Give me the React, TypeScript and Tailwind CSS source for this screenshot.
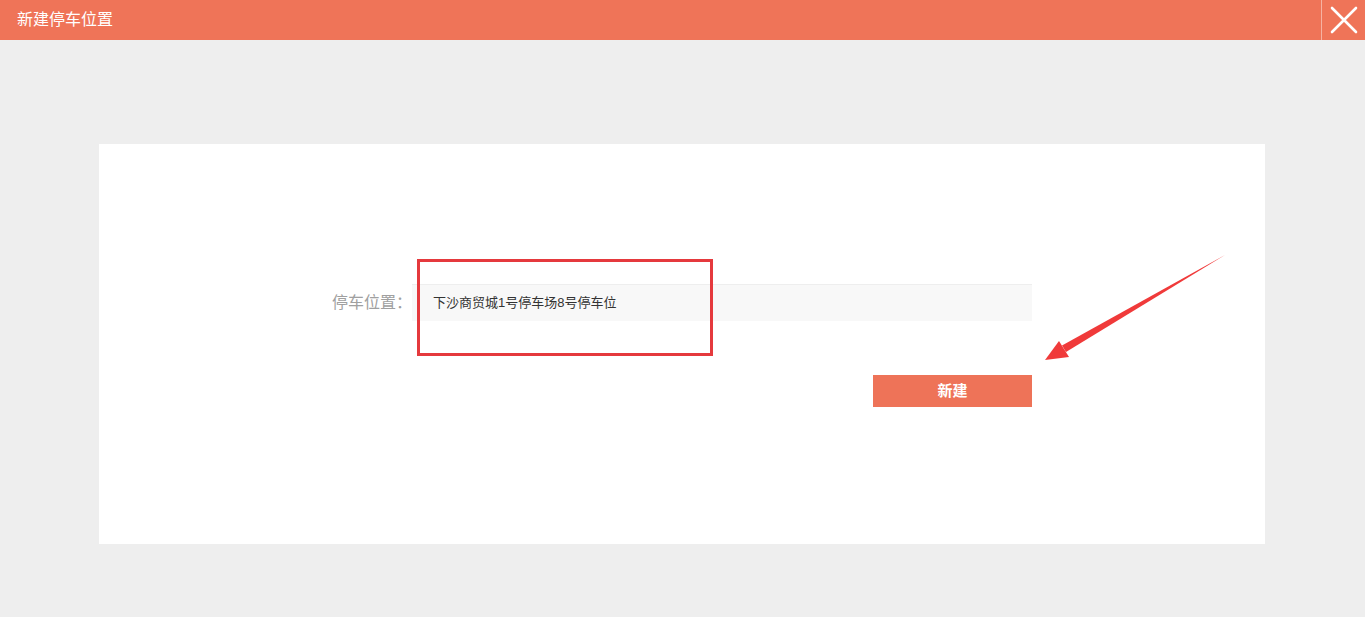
import React from 'react';

const font = { fontFamily: '"Liberation Sans", "Noto Sans CJK SC", sans-serif' };

export default function App() {
  return (
    <div className="min-h-[617px] w-[1365px] bg-[#eeeeee] flex flex-col" style={font}>
      <div className="h-10 bg-[#ef7458] flex items-center justify-between">
        <h1 className="pl-[17px] text-[16px] text-white font-normal">新建停车位置</h1>
        <button className="h-10 w-11 border-l border-[#f6b2a2] flex items-center justify-center">
          <svg width="28" height="28" viewBox="0 0 28 28">
            <path d="M2 2 L26 26 M26 2 L2 26" stroke="#fff" strokeWidth="2.6" strokeLinecap="round" />
          </svg>
        </button>
      </div>

      <div className="pt-[104px] pl-[99px]">
        <div className="relative w-[1166px] h-[400px] bg-white">
          <div className="pt-[140px] flex items-center">
            <label className="w-[313px] text-right text-[16px] text-[#a0a0a0] leading-[37px]">停车位置：</label>
            <div className="w-[620px] h-[37px] bg-[#f8f8f8] border-t border-[#eeeeee] flex items-center pl-[21px] text-[13px] text-[#333]">
              下沙商贸城1号停车场8号停车位
            </div>
          </div>
          <div className="pl-[774px] pt-[54px]">
            <button className="w-[159px] h-8 bg-[#ee7358] text-white text-[15px] font-bold">新建</button>
          </div>

          <div className="absolute left-[318px] top-[115px] w-[296px] h-[97px] border-[3px] border-[#e5393d]" />
          <svg className="absolute left-[941px] top-[106px]" width="190" height="115" viewBox="0 0 190 115">
            <path d="M185 5 L26 102 L22 95.5 Z" fill="#f03a3a" />
            <path d="M5 110 L19 91 L29 107 Z" fill="#f03a3a" />
          </svg>
        </div>
      </div>
    </div>
  );
}
